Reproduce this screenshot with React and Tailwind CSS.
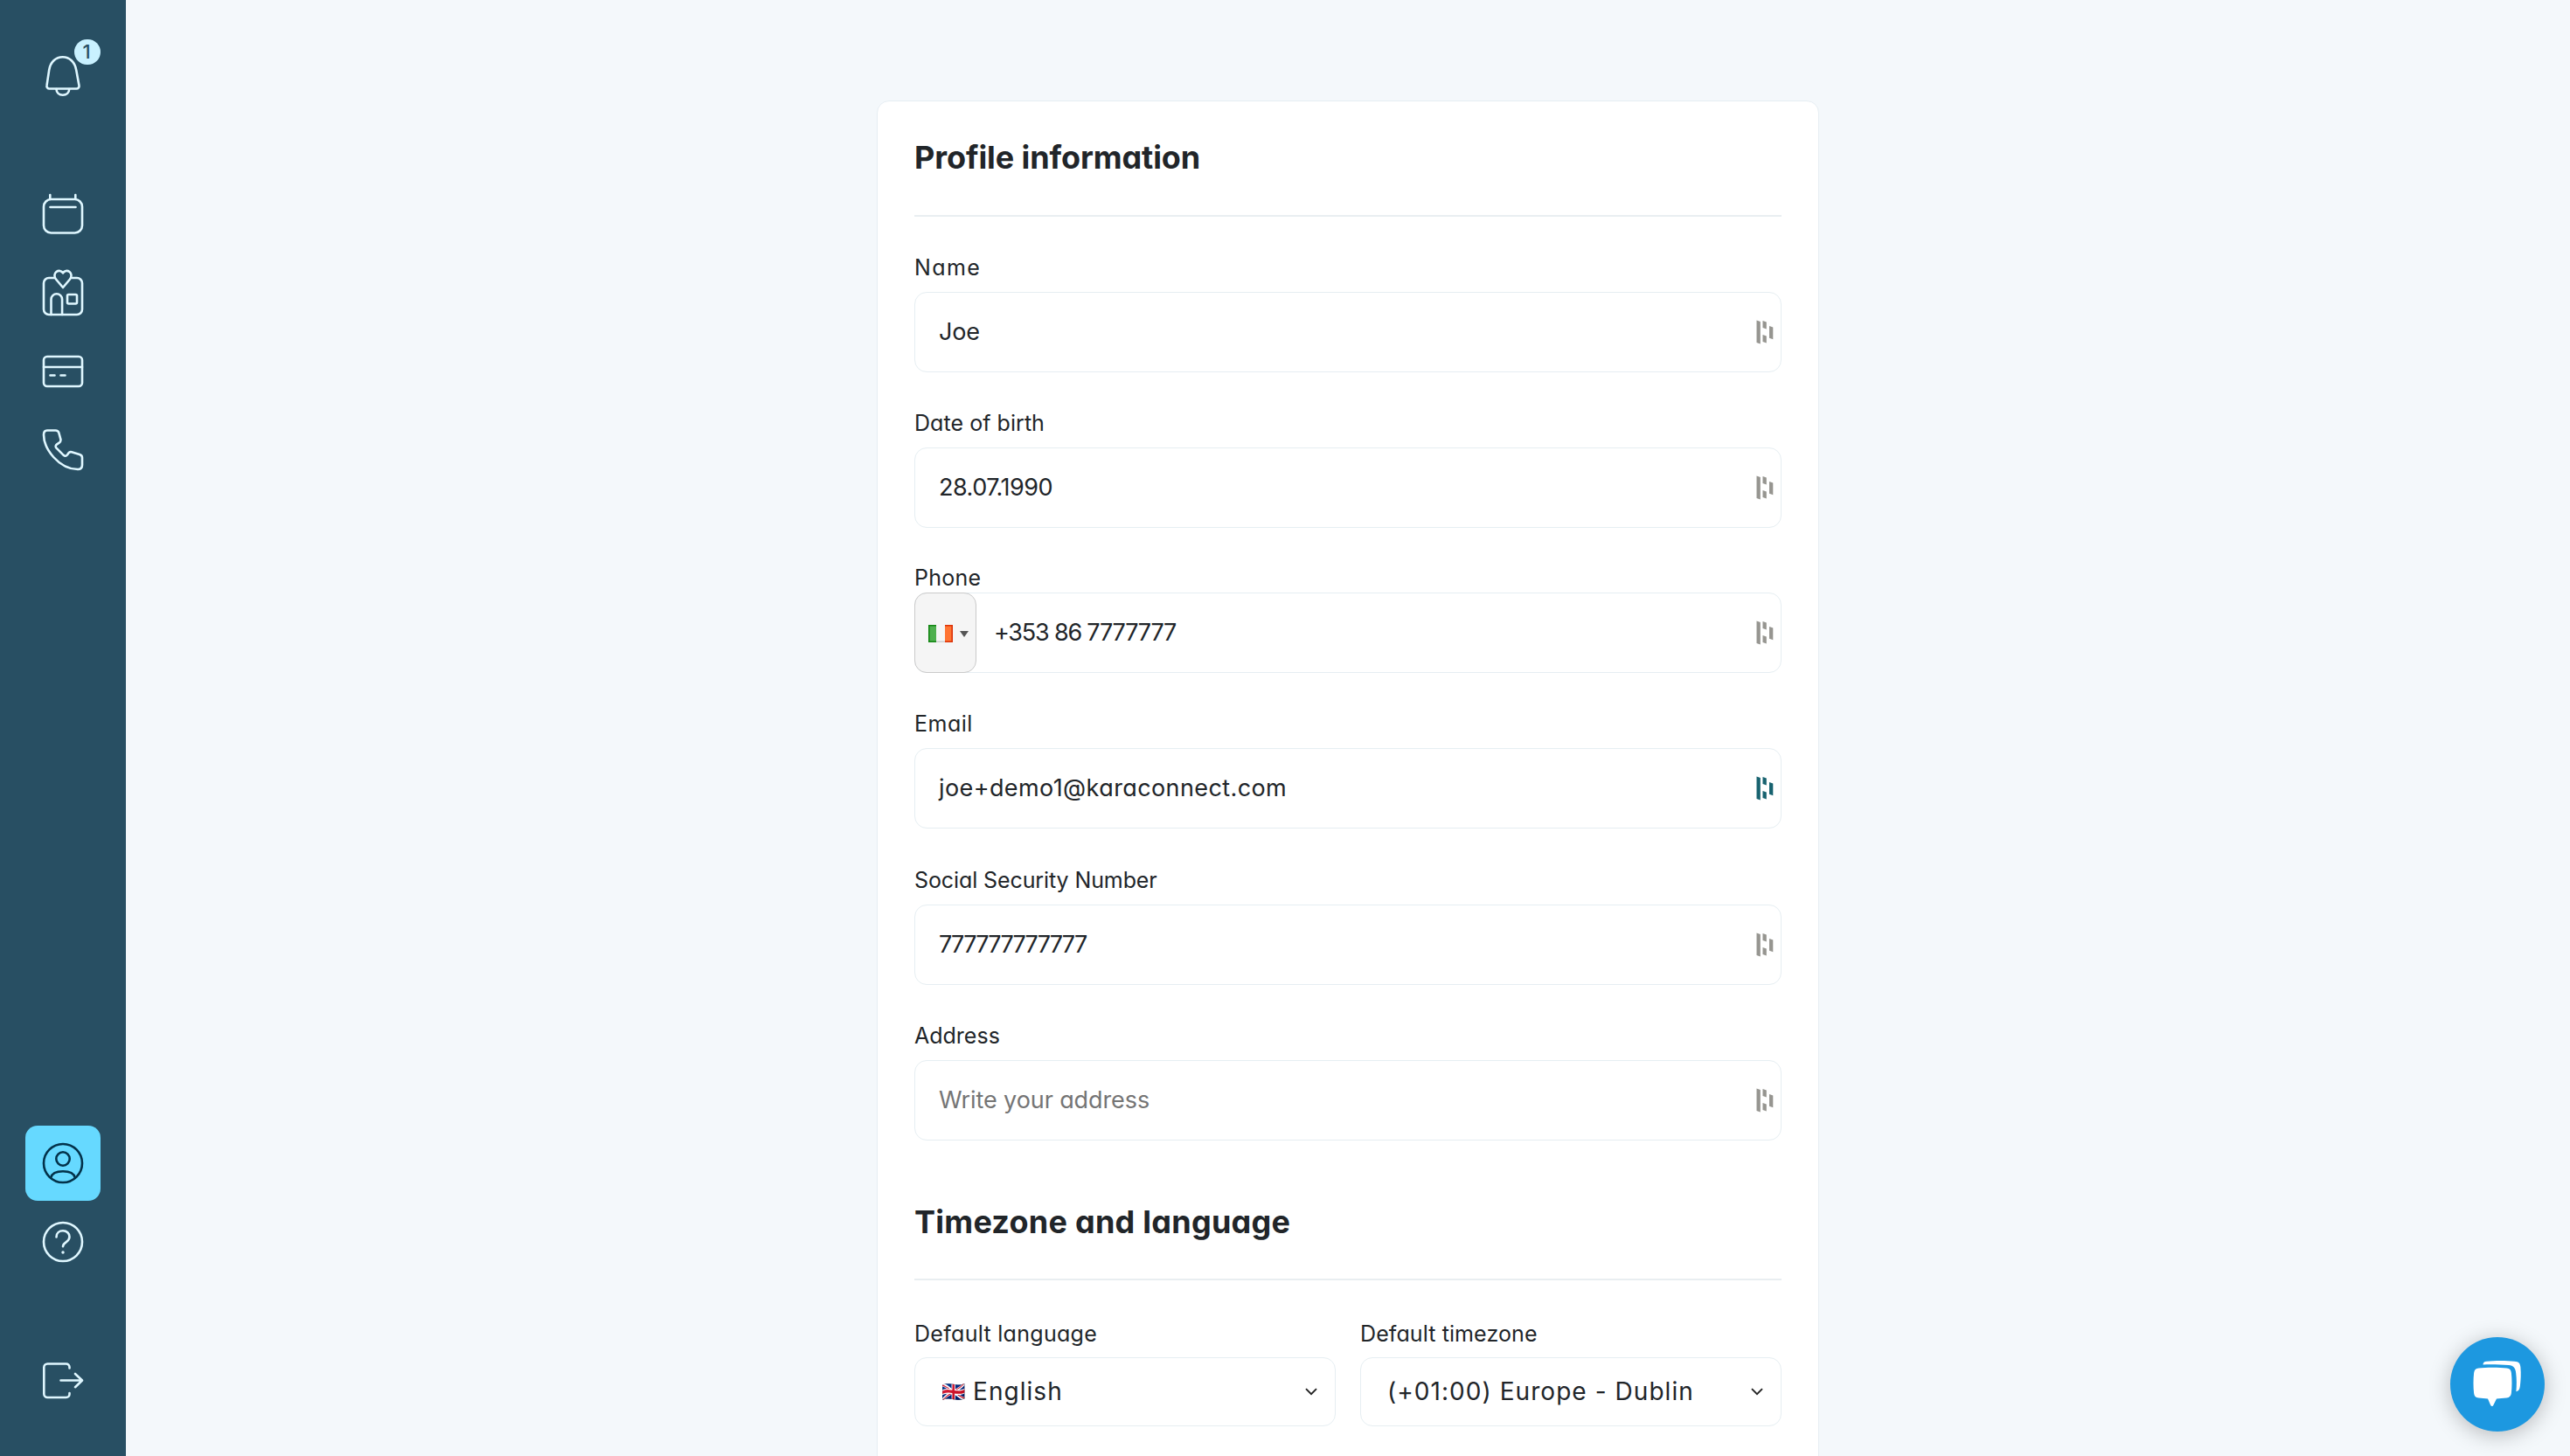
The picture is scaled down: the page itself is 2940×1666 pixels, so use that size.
const icons = {
  bell:
  <>
      <path d="M-15.5 14.5h31a3 3 0 0 0 3-3.6L15.2-7C13.6-16 7.6-21.8-.3-21.8S-14.4-16-15.8-7l-2.7 17.9a3 3 0 0 0 3 3.6z" />
      <path d="M-7.5 15c0 4 3 6.7 7.3 6.7S7.2 19 7.2 15" />
    </>,
  calendar:
  <>
      <rect x="-22" y="-17" width="44" height="38.5" rx="8.5" />
      <path d="M-14.7-22v4.500M14.300-22v4.500M-14.500-8h29" />
    </>,
  home:
  <>
      <path d="M-10-17h-6a6 6 0 0 0-6 6v30a6 6 0 0 0 6 6h32a6 6 0 0 0 6-6v-30a6 6 0 0 0-6-6h-5.500" />
      <path d="M0-6l-8-9.500c-2.300-2.800-2-6.500.5-8.500s6-1.300 7.500 1.500c1.500-2.800 5-3.500 7.500-1.500s2.800 5.700.5 8.500z" />
      <path d="M-13.500 25V7.500a6.300 6.300 0 0 1 12.600 0V25" />
      <rect x="5" y="2" width="11" height="10.500" rx="1.500" />
    </>,
  card:
  <>
      <rect x="-22" y="-17" width="44" height="34" rx="4" />
      <path d="M-22-5h44M-14.500 4.500h5M-2.500 4.500h5" />
    </>,
  phone:
  <path d="M-18-22.500h9.500c2 0 3.300.9 3.800 2.600l2 7.200c.5 2-.1 3.300-1.600 4.400l-2.600 1.700c-1.600 1.100-1.900 2.800-.6 4.300L.7 5.800c1.500 1.400 3.300 1.200 4.300-.4L6.300 3.600C7.200 2.300 8.600 1.900 10 2.300l9 2.700c2 .6 3 1.900 3 3.700V17c0 3.300-1.700 5-5 5C-4.500 22-22-1.500-22-17.500c0-3.300 1.200-5 4-5z" />,
  profile:
  <>
      <circle r="22" />
      <circle cy="-5" r="7.700" />
      <path d="M-13.800 16.500C-12.500 11.200-7.500 9.300 0 9.300s12.500 1.900 13.800 7.200" />
    </>,
  help:
  <>
      <circle r="22" />
      <path d="M-7.500-5.500C-7.500-10-4.300-12.700 0-12.700s7.500 3 7.500 7c0 6.500-7.500 5.500-7.500 11" />
      <circle cy="12" r="1" fill="currentColor" strokeWidth="1.500" />
    </>,
  logout:
  <>
      <path d="M7.500-14.500v-1.200a3.800 3.800 0 0 0-3.800-3.800h-21.400a4 4 0 0 0-4 4v30.500a4 4 0 0 0 4 4H3.700a3.800 3.800 0 0 0 3.800-3.800V14" />
      <path d="M-2.500-.5h24M14-8l8 7.500-8 7.700" />
    </>
};

const fields = [
  { label: 'Name', labelTracking: 'tracking-[1.4px]', value: 'Joe', tracking: 'tracking-[-0.2px]', spacing: 'pt-[42px]', gap: 'mb-[12px]' },
  { label: 'Date of birth', labelTracking: 'tracking-[0.05px]', value: '28.07.1990', tracking: 'tracking-[-0.5px]', spacing: 'pt-[42px]', gap: 'mb-[12px]' },
  { label: 'Phone', labelTracking: 'tracking-[0.25px]', value: '+353 86 7777777', tracking: 'tracking-[-1.2px]', spacing: 'pt-[41px]', gap: 'mb-[1px]', phone: true },
  { label: 'Email', labelTracking: 'tracking-[0.5px]', value: 'joe+demo1@karaconnect.com', tracking: 'tracking-[0.4px]', spacing: 'pt-[42px]', gap: 'mb-[12px]', active: true },
  { label: 'Social Security Number', labelTracking: 'tracking-[-0.1px]', value: '777777777777', tracking: 'tracking-[-1.72px]', spacing: 'pt-[43px]', gap: 'mb-[12px]' },
  { label: 'Address', labelTracking: 'tracking-normal', placeholder: 'Write your address', tracking: 'tracking-[-0.1px]', spacing: 'pt-[42px]', gap: 'mb-[12px]' }
];

const Icon = ({ name }) =>
<svg
  className="w-[60px] h-[60px]"
  viewBox="-30 -30 60 60"
  fill="none"
  stroke="currentColor"
  strokeWidth="2.6"
  strokeLinecap="round"
  strokeLinejoin="round">
    {icons[name]}
  </svg>;

const NavItem = ({ name }) =>
<a className="h-[90px] w-full flex items-center justify-center text-[#dff7ff]">
    <Icon name={name} />
  </a>;

const FieldMark = ({ active }) =>
<svg
  className={`w-[20px] h-[28px] shrink-0 ${active ? 'text-[#17626f]' : 'text-[#969590]'}`}
  viewBox="0 0 20 28"
  fill="currentColor">
    <path d="M.5.500L4.800 2v25.500L.5 26zM7.500 1l4.300 1.500v8L7.500 9zM7.500 17l4.300 1.500v8L7.500 25zM15 7l4.300 1.500v13.700L15 20.700z" />
  </svg>;

const IrishFlag = () =>
<svg className="w-[28px] h-[20px]" viewBox="0 0 28 20">
    <path d="M0 0h9v20H0z" fill="#4fb04f" />
    <path d="M9 0h10v20H9z" fill="#f6f6f6" />
    <path d="M19 0h9v20h-9z" fill="#ff7433" />
    <path d="M9 .8H.8v18.400H9" fill="none" stroke="#138613" strokeWidth="1.600" />
    <path d="M9 19.200h10" stroke="#cfcfcf" strokeWidth="1.600" />
    <path d="M19 .8h8.200v18.400H19" fill="none" stroke="#dc3208" strokeWidth="1.600" />
  </svg>;

const Label = ({ children, className }) =>
<label className={`block h-[32px] text-[25px] leading-[32px] ${className}`}>{children}</label>;

const Field = ({ label, labelTracking, value, placeholder, tracking, spacing, gap, phone, active }) =>
<div className={spacing}>
    <Label className={`${labelTracking} ${gap}`}>{label}</Label>
    <div className="h-[92px] flex items-center rounded-[14px] border border-[#e6eef2] pr-[8px]">
      {phone &&
    <div className="-ml-px w-[71px] h-[92px] flex items-center gap-[8px] pl-[15px] pt-[2px] rounded-[14px] bg-[#f5f5f5] border border-[#cacaca]">
          <IrishFlag />
          <svg className="w-[10px] h-[7px]" viewBox="0 0 10 7"><path d="M0 0h10L5 7z" fill="#555" /></svg>
        </div>
    }
      <span className={`flex-1 text-[27px] ${tracking} ${phone ? 'ml-[20px]' : 'ml-[27px]'} ${placeholder ? 'text-[#757575]' : ''}`}>
        {value || placeholder}
      </span>
      <FieldMark active={active} />
    </div>
  </div>;

const SelectField = ({ label, labelTracking, children }) =>
<div className="flex-1">
    <Label className={`${labelTracking} mb-[11px]`}>{label}</Label>
    <div className="h-[79px] flex items-center justify-between rounded-[14px] border border-[#e6eef2] pl-[30px] pr-[20px] pb-px text-[28px]">
      <span className="flex items-center">{children}</span>
      <svg className="w-[14px] h-[9px]" viewBox="0 0 14 9" fill="none" stroke="#222" strokeWidth="1.900">
        <path d="M1 1.200l6 6 6-6" />
      </svg>
    </div>
  </div>;

const SectionTitle = ({ children, className }) =>
<h2 className={`text-[36px] leading-[48px] font-bold border-b-2 border-[#e9eef1] ${className}`}>{children}</h2>;

const App = () => {
  return (
    <div className="relative h-[1666px] w-full flex overflow-hidden bg-[#f4f8fb] text-[#212529] font-['Inter','Open_Sans',sans-serif] [font-feature-settings:'cv11']">
      <nav className="w-[144px] shrink-0 bg-[#284f63] flex flex-col items-center pt-[42px] pb-[41px]">
        <div className="relative w-full">
          <NavItem name="bell" />
          <span className="absolute left-[85px] top-[3px] w-[30px] h-[29px] rounded-full bg-[#c9f1ff] text-[#284f63] text-[22px] font-medium flex items-center justify-center pr-[2px]">
            1
          </span>
        </div>
        <div className="w-full pt-[68px]">
          <NavItem name="calendar" />
          <NavItem name="home" />
          <NavItem name="card" />
          <NavItem name="phone" />
        </div>
        <div className="flex-1" />
        <a className="w-[86px] h-[86px] mb-[2px] rounded-[14px] bg-[#66d9ff] text-[#03324a] flex items-center justify-center">
          <Icon name="profile" />
        </a>
        <NavItem name="help" />
        <div className="w-full pt-[69px]">
          <NavItem name="logout" />
        </div>
      </nav>

      <main className="flex-1 flex justify-center pt-[115px]">
        <section className="w-[1078px] h-[1600px] shrink-0 rounded-[14px] border border-[#e6eef3] bg-white px-[42px]">
          <SectionTitle className="pt-[40px] pb-[42px] tracking-[-0.1px]">Profile information</SectionTitle>
          {fields.map((field) => <Field key={field.label} {...field} />)}

          <SectionTitle className="pt-[69px] pb-[41px] tracking-[0.25px]">Timezone and language</SectionTitle>
          <div className="flex gap-[28px] pt-[45px]">
            <SelectField label="Default language" labelTracking="tracking-[0.3px]">
              <span className="w-[36px] text-[22px]">🇬🇧</span>
              <span className="tracking-[1.05px]">English</span>
            </SelectField>
            <SelectField label="Default timezone" labelTracking="tracking-[0.1px]">
              <span className="tracking-[1.05px]">(+01:00) Europe - Dublin</span>
            </SelectField>
          </div>
        </section>
      </main>

      <button className="absolute right-[29px] bottom-[28px] w-[108px] h-[108px] rounded-full bg-[#1d98e0] shadow-[0_4px_24px_rgba(0,0,0,0.25)] flex items-center justify-center">
        <svg className="w-[60px] h-[60px]" viewBox="0 0 60 60" fill="#fff">
          <path d="M8.500 11.500c8-1 24-1 32 0 3.500.4 5 2 5.400 5.500.8 7 .8 16 0 23-.4 3.500-2 5-5.400 5.400-4 .5-8 .8-11.500 1l-3.500 7c-1 2-2.500 2-3.500 0l-3-7c-3.500-.1-7-.4-10.500-.9-3.500-.4-5-2-5.400-5.500-.8-7-.8-16 0-23 .4-3.500 2-5.100 5.400-5.500z" />
          <path d="M13.500 7.500c0-2.500 1.500-3.500 4-3.800 9-.9 23-1 32 .1 5 .5 6.400 2 6.900 6.500.7 8 .3 15-.5 21.500-.4 3.500-1.500 6-4.500 6.500.6-7 .6-14.500-.2-21-.6-6-3-8.700-8.300-9.200C34 7.400 22 7.100 13.500 7.500z" />
        </svg>
      </button>
    </div>);

};

export default App;
